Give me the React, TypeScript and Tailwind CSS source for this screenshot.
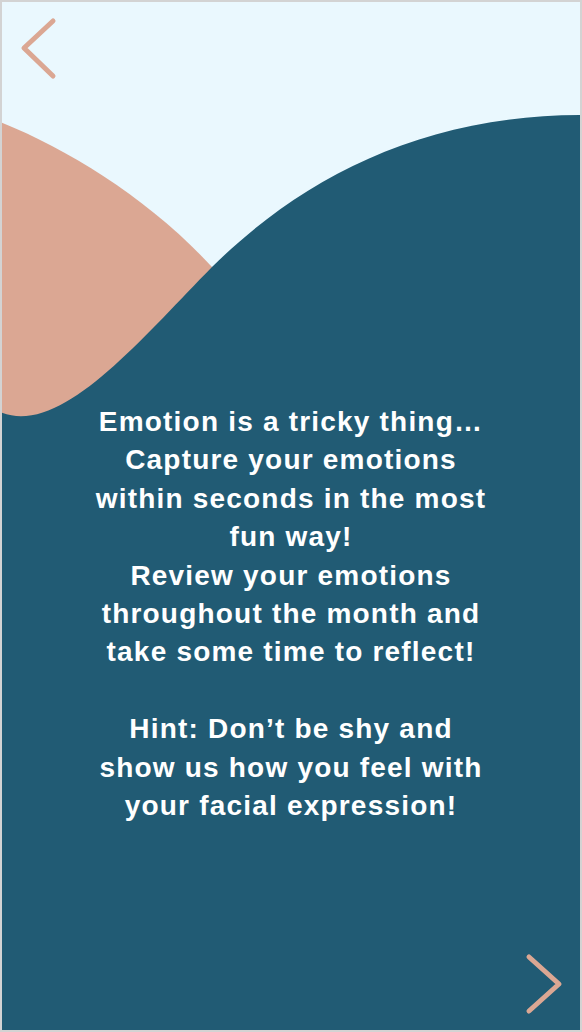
import React from "react";

const lines1 = [
  "Emotion is a tricky thing…",
  "Capture your emotions",
  "within seconds in the most",
  "fun way!",
  "Review your emotions",
  "throughout the month and",
  "take some time to reflect!",
];
const lines2 = [
  "Hint: Don’t be shy and",
  "show us how you feel with",
  "your facial expression!",
];

export default function App() {
  return (
    <div className="w-[582px] h-[1032px] border-2 border-[#d3d3d3] bg-[#eaf8fe] relative overflow-hidden">
      <svg
        className="absolute inset-0"
        width="578"
        height="1028"
        viewBox="2 2 578 1028"
        aria-hidden="true"
      >
        <path
          d="M0,122 C70,150 150,200 212,267 L260,360 L0,440 Z"
          fill="#dba793"
        />
        <path
          d="M0,412 C60,438 140,340 212,267 C300,180 420,115 582,115 L582,1032 L0,1032 Z"
          fill="#215b74"
        />
      </svg>
      <div className="relative flex flex-col h-full">
        <div className="pl-[18px] pt-[14px]">
          <svg width="40" height="66" viewBox="0 0 40 66" fill="none">
            <polyline
              points="33,5 4,32 33,60"
              stroke="#dba793"
              strokeWidth="5"
              strokeLinecap="round"
              strokeLinejoin="round"
            />
          </svg>
        </div>
        <div
          className="mt-[321px] text-center text-white font-bold text-[28px] leading-[38.4px] tracking-[1.2px]"
          style={{ fontFamily: '"Liberation Sans", Arial, sans-serif' }}
        >
          {lines1.map((l) => (
            <div key={l}>{l}</div>
          ))}
          <div className="h-[38.4px]" />
          {lines2.map((l) => (
            <div key={l}>{l}</div>
          ))}
        </div>
        <div className="mt-auto self-end mr-[16px] mb-[14px]">
          <svg width="40" height="64" viewBox="0 0 40 64" fill="none">
            <polyline
              points="5,5 35,32 5,59"
              stroke="#dba793"
              strokeWidth="5"
              strokeLinecap="round"
              strokeLinejoin="round"
            />
          </svg>
        </div>
      </div>
    </div>
  );
}
